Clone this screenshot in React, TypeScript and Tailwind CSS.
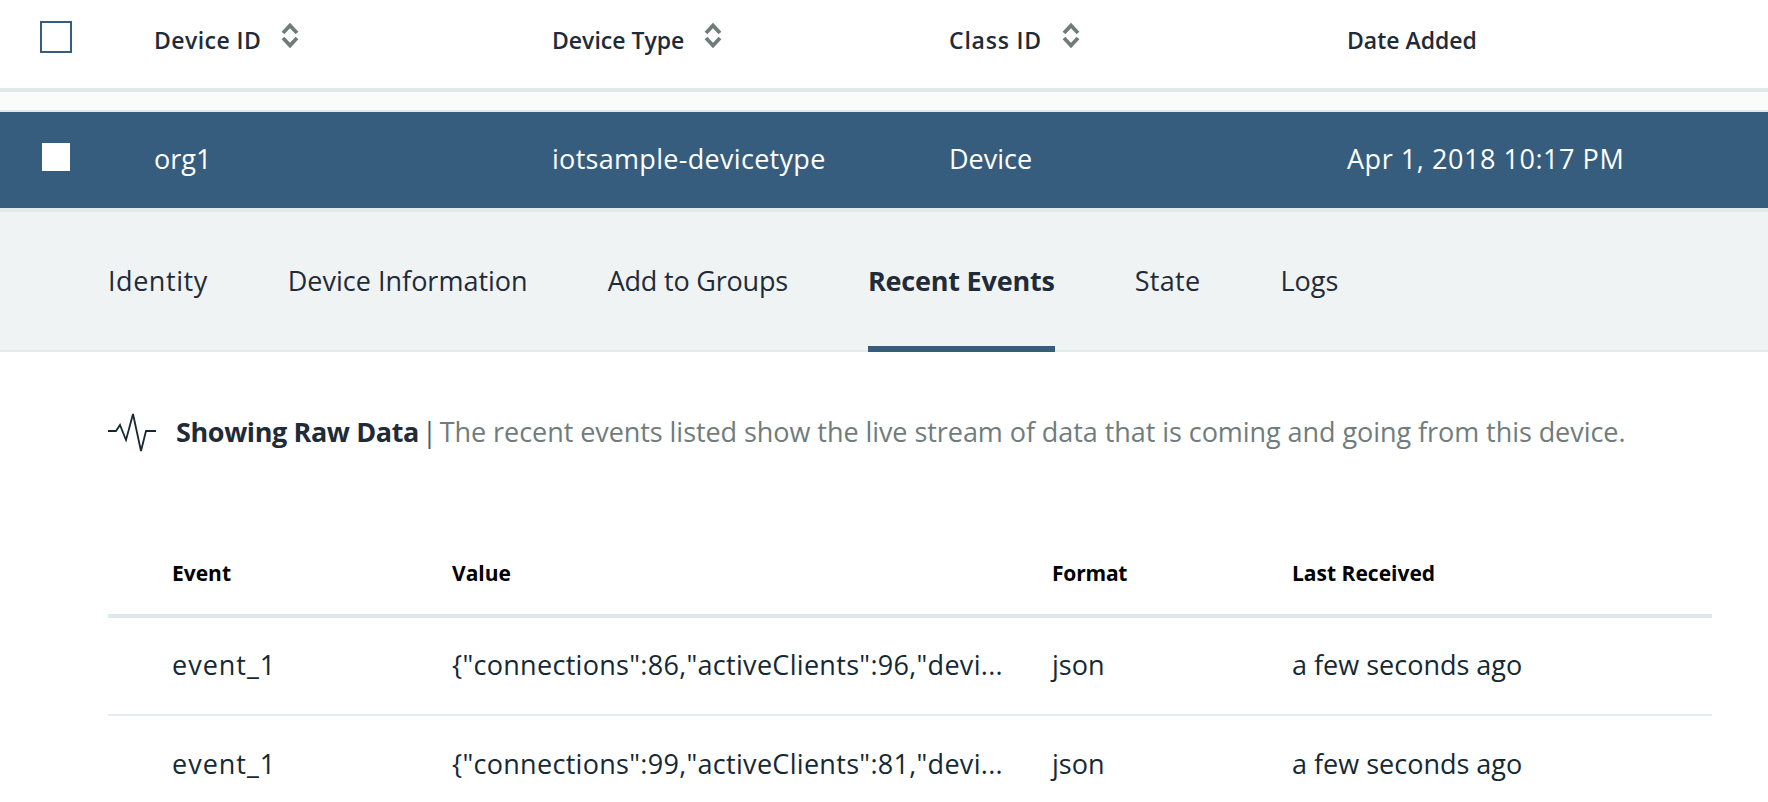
import React from "react";

function Sort() {
  return (
    <svg width="18" height="28" viewBox="0 0 18 28" className="ml-[20px] mt-[-12px] shrink-0">
      <path d="M2 12 L9 4.5 L16 12" fill="none" stroke="#707c7c" strokeWidth="3.8" />
      <path d="M2 17 L9 24.5 L16 17" fill="none" stroke="#707c7c" strokeWidth="3.8" />
    </svg>
  );
}

function HeadCell({ label, sort, w, track }: { label: string; sort?: boolean; w: string; track: string }) {
  return (
    <div className={`flex items-center mt-[-7px] ${w}`}>
      <span className={`text-[23px] font-semibold text-[#1f2b38] ${track}`}>{label}</span>
      {sort && <Sort />}
    </div>
  );
}

function EventRow({ value, last }: { value: string; last?: boolean }) {
  return (
    <div className={`flex items-center h-[98px] pl-[64px] pb-[2px] text-[27px] text-[#152934] ${last ? "" : "border-b-2 border-[#e6ecec]"}`}>
      <div className="w-[280px] tracking-[1px]">event_1</div>
      <div className="w-[600px] tracking-[0.3px]">{value}</div>
      <div className="w-[240px]">json</div>
      <div>a few seconds ago</div>
    </div>
  );
}

export default function App() {
  return (
    <div className="w-[1768px] h-[802px] overflow-hidden bg-white font-['Open_Sans','Liberation_Sans',sans-serif]">
      <div className="flex items-center h-[88px] pl-[40px]">
        <div className="w-[32px] h-[32px] border-2 border-[#375d7e] mt-[-14px] mr-[82px]" />
        <HeadCell label="Device ID" sort w="w-[398px]" track="tracking-[0.45px]" />
        <HeadCell label="Device Type" sort w="w-[397px]" track="tracking-[0px]" />
        <HeadCell label="Class ID" sort w="w-[398px]" track="tracking-[0.8px]" />
        <HeadCell label="Date Added" w="w-[300px]" track="tracking-[0px]" />
      </div>
      <div className="h-[4px] bg-[#dfe9e9]" />
      <div className="h-[18px] bg-[#fafbfb] border-b-2 border-[#dfe9e9] box-content" />
      <div className="flex items-center h-[96px] pl-[42px] bg-[#375d7e] text-white text-[27px]">
        <div className="w-[28px] h-[28px] bg-white mt-[-6px] mr-[84px]" />
        <div className="w-[398px] mt-[-2px]">org1</div>
        <div className="w-[397px] mt-[-2px] tracking-[0.3px]">iotsample-devicetype</div>
        <div className="w-[398px] mt-[-2px]">Device</div>
        <div className="mt-[-2px] tracking-[0.55px]">Apr 1, 2018 10:17 PM</div>
      </div>
      <div className="h-[4px] bg-[#e3e9ea]" />
      <div className="flex items-start h-[140px] pl-[108px] gap-[80px] bg-[#f0f3f4] border-b-2 border-[#e3ebeb] text-[27px] text-[#1f2b38]">
        <div className="pt-[49px] tracking-[0.55px]">Identity</div>
        <div className="pt-[49px]">Device Information</div>
        <div className="pt-[49px] tracking-[-0.2px]">Add to Groups</div>
        <div className="pt-[49px] h-[140px] border-b-[6px] border-[#375d7e] font-bold tracking-[-0.2px]">Recent Events</div>
        <div className="pt-[49px] tracking-[0.3px]">State</div>
        <div className="pt-[49px]">Logs</div>
      </div>
      <div className="flex items-center mt-[60px] ml-[108px] h-[40px]">
        <svg width="48" height="40" viewBox="0 0 48 40" className="mr-[20px] shrink-0">
          <path d="M0 19 H8 L12 13 L18 28 L25 2 L33 39 L38 19 H48" fill="none" stroke="#152934" strokeWidth="1.8" />
        </svg>
        <span className="text-[27px] font-bold text-[#1f2b38] tracking-[-0.4px]">Showing Raw Data</span>
        <span className="text-[27px] text-[#3d5c75] mx-[3px]">|</span>
        <span className="text-[27px] text-[#707c7c] tracking-[-0.06px]">The recent events listed show the live stream of data that is coming and going from this device.</span>
      </div>
      <div className="mx-[108px] w-[1604px] mt-[90px]">
        <div className="flex items-center h-[64px] pl-[64px] text-[21px] font-bold text-black border-b-4 border-[#dfe9e9] pb-[8px] box-content">
          <div className="w-[280px]">Event</div>
          <div className="w-[600px]">Value</div>
          <div className="w-[240px] tracking-[-0.2px]">Format</div>
          <div>Last Received</div>
        </div>
        <EventRow value={'{"connections":86,"activeClients":96,"devi...'} />
        <EventRow value={'{"connections":99,"activeClients":81,"devi...'} last />
      </div>
    </div>
  );
}
